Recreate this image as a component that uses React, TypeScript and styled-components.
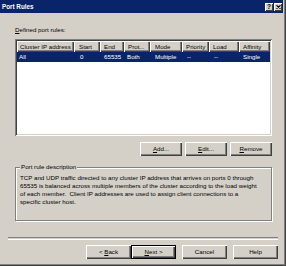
import React from "react";
import styled, { createGlobalStyle } from "styled-components";

const GlobalStyle = createGlobalStyle`
  html, body {
    margin: 0;
    padding: 0;
    background: #d4d0c8;
  }
  body {
    font-family: "Liberation Sans", Arial, sans-serif;
    font-size: 6.2px;
    color: #000000;
  }
`;

const COLS = "57px 26px 24px 26px 32px 27px 30px 31px";

const Window = styled.div`
  width: 286px;
  height: 266px;
  box-sizing: border-box;
  padding: 0 3px 2px 0;
  background: #d4d0c8;
  box-shadow: inset -1px -1px 0 #404040, inset -2px -2px 0 #808080;
  display: flex;
  flex-direction: column;
`;

const TitleBar = styled.div`
  height: 13px;
  flex: none;
  background: #0a246a;
  display: flex;
  align-items: center;
  justify-content: space-between;
  padding: 0 1px 0 2px;
`;

const TitleText = styled.span`
  color: #ffffff;
  font-weight: 700;
  font-size: 6.3px;
  line-height: 13px;
`;

const CaptionButtons = styled.div`
  display: flex;
  gap: 1px;
`;

const CaptionButton = styled.div`
  width: 8px;
  height: 8px;
  box-sizing: border-box;
  background: #d4d0c8;
  box-shadow: inset 1px 1px 0 #ffffff, inset -1px -1px 0 #404040;
  display: flex;
  align-items: center;
  justify-content: center;
  font-weight: 700;
  font-size: 6.5px;
  line-height: 8px;
`;

const Body = styled.div`
  flex: 1;
  display: flex;
  flex-direction: column;
  padding: 0 11px 0 15px;
`;

const Label = styled.div`
  margin-top: 13px;
  line-height: 8px;
  white-space: nowrap;
`;

const U = styled.span`
  text-decoration: underline;
`;

const ListView = styled.div`
  margin-top: 5px;
  height: 97px;
  box-sizing: border-box;
  padding: 2px;
  background: #ffffff;
  box-shadow: inset 1px 1px 0 #808080, inset -1px -1px 0 #ffffff,
    inset 2px 2px 0 #404040, inset -2px -2px 0 #d4d0c8;
  overflow: hidden;
`;

const HeaderRow = styled.div`
  display: grid;
  grid-template-columns: ${COLS};
  height: 11px;
`;

const HeaderCell = styled.div<{ $pad: number }>`
  background: #d4d0c8;
  box-shadow: inset 1px 1px 0 #ffffff, inset -1px -1px 0 #404040,
    inset -2px -2px 0 #808080;
  padding-left: ${(p) => p.$pad}px;
  line-height: 11px;
  white-space: nowrap;
  overflow: hidden;
`;

const DataRow = styled.div<{ $selected?: boolean }>`
  display: grid;
  grid-template-columns: ${COLS};
  height: 10px;
  background: ${(p) => (p.$selected ? "#0a246a" : "transparent")};
  color: ${(p) => (p.$selected ? "#ffffff" : "#000000")};
`;

const DataCell = styled.div<{ $pad: number }>`
  padding-left: ${(p) => p.$pad}px;
  line-height: 10px;
  white-space: nowrap;
  overflow: hidden;
`;

const ButtonRow = styled.div<{ $gap: number }>`
  display: flex;
  justify-content: flex-end;
  gap: ${(p) => p.$gap}px;
`;

const ListButtons = styled(ButtonRow)`
  margin-top: 6px;
`;

const Button = styled.div<{ $w: number; $default?: boolean }>`
  width: ${(p) => p.$w}px;
  height: 14px;
  box-sizing: border-box;
  background: #d4d0c8;
  border: ${(p) => (p.$default ? "1px solid #000000" : "none")};
  box-shadow: inset 1px 1px 0 #ffffff, inset -1px -1px 0 #404040,
    inset -2px -2px 0 #808080;
  display: flex;
  align-items: center;
  justify-content: center;
  line-height: 12px;
  white-space: pre;
`;

const GroupBox = styled.fieldset`
  margin: 7px 0 0 0;
  min-width: 0;
  height: 58px;
  box-sizing: border-box;
  padding: 3px 0 0 4px;
  border: 1px solid #808080;
  box-shadow: inset 1px 1px 0 #ffffff, 1px 1px 0 #ffffff;
`;

const Legend = styled.legend`
  padding: 0 1px;
  line-height: 8px;
  background: #d4d0c8;
`;

const Description = styled.div`
  line-height: 8px;
  white-space: nowrap;
`;

const Separator = styled.div`
  margin: 16px -6px 0 -7px;
  height: 1px;
  border-top: 1px solid #808080;
  border-bottom: 1px solid #ffffff;
`;

const WizardButtons = styled(ButtonRow)`
  margin: 5px -6px 0 0;
`;

const Pair = styled.div`
  display: flex;
`;

const columns = [
  { title: "Cluster IP address", value: "All", hp: 3, dp: 2 },
  { title: "Start", value: "0", hp: 5, dp: 6 },
  { title: "End", value: "65535", hp: 4, dp: 4 },
  { title: "Prot...", value: "Both", hp: 4, dp: 3 },
  { title: "Mode", value: "Multiple", hp: 5, dp: 5 },
  { title: "Priority", value: "--", hp: 4, dp: 5 },
  { title: "Load", value: "--", hp: 4, dp: 5 },
  { title: "Affinity", value: "Single", hp: 4, dp: 4 },
];

const App: React.FC = () => {
  return (
    <>
      <GlobalStyle />
      <Window>
        <TitleBar>
          <TitleText>Port Rules</TitleText>
          <CaptionButtons>
            <CaptionButton>?</CaptionButton>
            <CaptionButton>
              <svg width="5" height="4" viewBox="0 0 5 4">
                <path d="M0.5 0.3 L4.5 3.7 M4.5 0.3 L0.5 3.7" stroke="#000" strokeWidth="1.1" />
              </svg>
            </CaptionButton>
          </CaptionButtons>
        </TitleBar>
        <Body>
          <Label>
            <U>D</U>efined port rules:
          </Label>
          <ListView>
            <HeaderRow>
              {columns.map((c) => (
                <HeaderCell key={c.title} $pad={c.hp}>
                  {c.title}
                </HeaderCell>
              ))}
            </HeaderRow>
            <DataRow $selected>
              {columns.map((c) => (
                <DataCell key={c.title} $pad={c.dp}>
                  {c.value}
                </DataCell>
              ))}
            </DataRow>
          </ListView>
          <ListButtons $gap={3}>
            <Button $w={42}>
              <span>
                <U>A</U>dd...
              </span>
            </Button>
            <Button $w={42}>
              <span>
                <U>E</U>dit...
              </span>
            </Button>
            <Button $w={42}>
              <span>
                <U>R</U>emove
              </span>
            </Button>
          </ListButtons>
          <GroupBox>
            <Legend>Port rule description</Legend>
            <Description>
              TCP and UDP traffic directed to any cluster IP address that arrives on ports 0 through
              <br />
              65535 is balanced across multiple members of the cluster according to the load weight
              <br />
              of each member.&nbsp; Client IP addresses are used to assign client connections to a
              <br />
              specific cluster host.
            </Description>
          </GroupBox>
          <Separator />
          <WizardButtons $gap={6}>
            <Pair>
              <Button $w={45}>
                <span>
                  &lt; <U>B</U>ack
                </span>
              </Button>
              <Button $w={45} $default>
                <span>
                  <U>N</U>ext &gt;
                </span>
              </Button>
            </Pair>
            <Button $w={45}>Cancel</Button>
            <Button $w={45}>Help</Button>
          </WizardButtons>
        </Body>
      </Window>
    </>
  );
};

export default App;
